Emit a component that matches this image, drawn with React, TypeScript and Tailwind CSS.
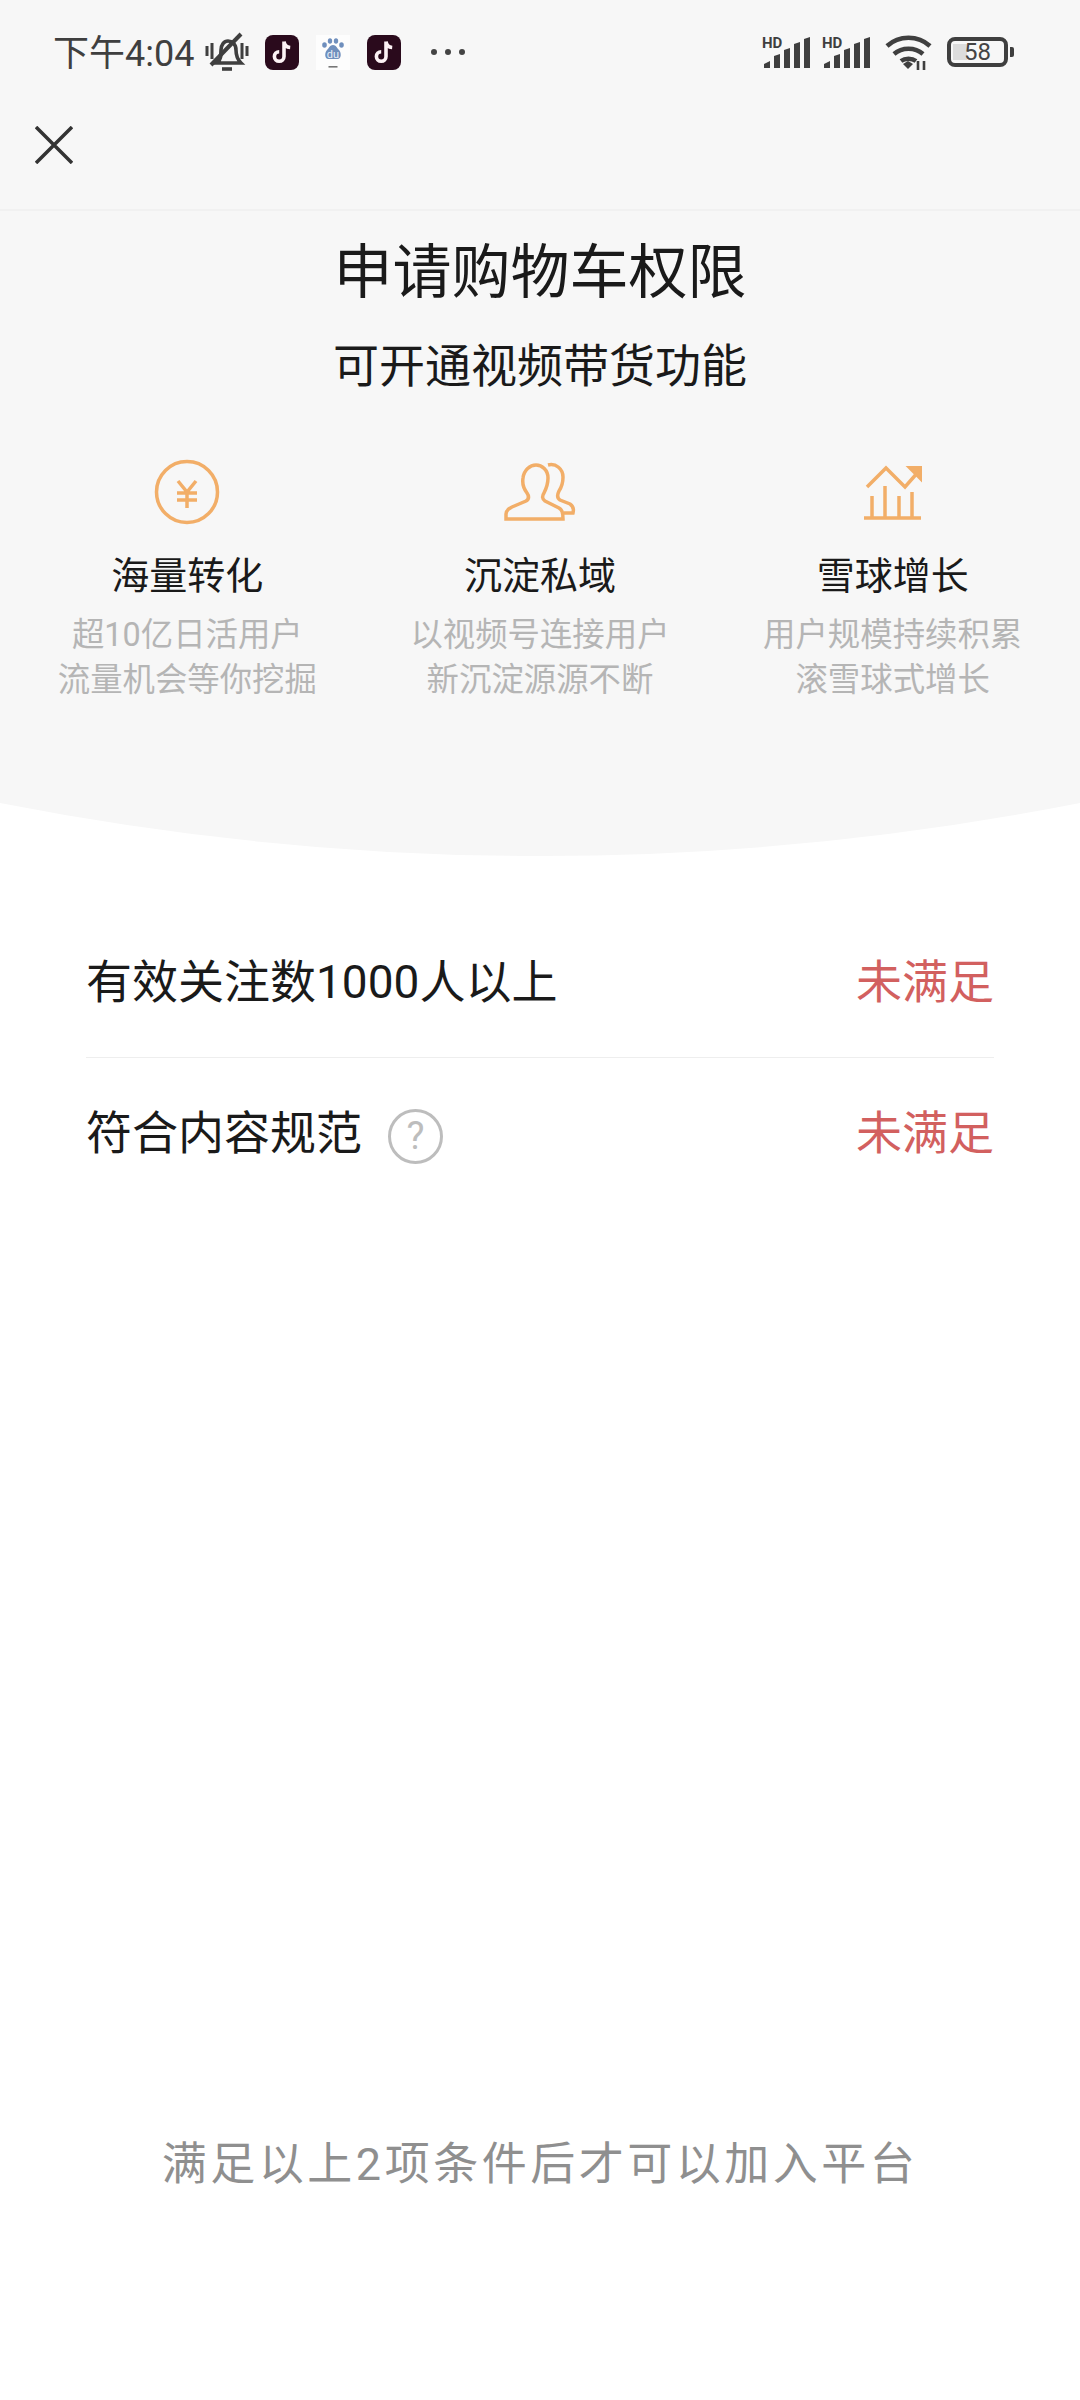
const font = { fontFamily: 'Roboto, "Noto Sans CJK SC", sans-serif' }

function TikTokIcon() {
	return (
		<svg width="34" height="35" viewBox="0 0 34 35">
			<rect width="34" height="35" rx="8" fill="#2a0a1c" />
			<path
				d="M19 6.500v15a4.800 4.800 0 1 1-4.800-4.800M19 6.500c.4 3.400 2.800 5.700 6.200 6"
				fill="none"
				stroke="#fdf2f5"
				strokeWidth="3.600"
			/>
		</svg>
	)
}

function BaiduIcon() {
	return (
		<svg width="34" height="35" viewBox="0 0 34 35">
			<rect width="34" height="35" fill="#fdfdfd" />
			<g fill="#6f8fbd">
				<ellipse cx="8.500" cy="10" rx="2.300" ry="2.800" />
				<ellipse cx="14" cy="6" rx="2.200" ry="2.800" />
				<ellipse cx="20" cy="6" rx="2.200" ry="2.800" />
				<ellipse cx="25.500" cy="10" rx="2.300" ry="2.800" />
				<path d="M17 10c3 0 4 3 6 5s3 8-1 9H12c-4-1-3-7-1-9s3-5 6-5Z" />
			</g>
			<text x="17" y="23" fontSize="11" textAnchor="middle" fill="#e8eef7" fontFamily="Roboto, sans-serif">
				du
			</text>
			<rect x="12.500" y="31" width="9" height="1.600" fill="#777" />
		</svg>
	)
}

function MutedBell() {
	return (
		<svg width="44" height="40" viewBox="0 0 44 40" fill="none" stroke="#3f3f3f" strokeWidth="3.600">
			<path d="M2 14v10M7 11v16M37 11v16M42 14v10" strokeWidth="3" />
			<path d="M12 31c4-3 4-8 4-13 0-5 3-9 7-9s8 3 8 9c0 5 1 9 5 13H8" />
			<path d="M6 33 36 2" strokeWidth="4" />
			<path d="M17 37h10" strokeWidth="3.600" />
		</svg>
	)
}

function Signal() {
	return (
		<svg width="50" height="36" viewBox="0 0 50 36" fill="#3f3f3f">
			<path d="M2 34v-4l6-3v7ZM12 34V22l6-2v14ZM22 34V16l6-2v20ZM32 34V10l6-2v26ZM42 34V5l6-2v31Z" />
			<text x="0" y="14" fontSize="15" fontWeight="700" fontFamily="Roboto, sans-serif">
				HD
			</text>
		</svg>
	)
}

function Wifi() {
	return (
		<svg width="47" height="36" viewBox="0 0 47 36" fill="none" stroke="#3f3f3f" strokeWidth="4.500">
			<path d="M2 12c12-11 31-11 43 0M9 20c8-7 21-7 29 0M16 27c4-3 11-3 15 0" />
			<path d="M18 30l5-3 5 3-5 5Z" fill="#3f3f3f" stroke="none" />
			<path d="M33 27v9M39 36v-9" strokeWidth="2.600" />
		</svg>
	)
}

function YuanIcon() {
	return (
		<svg width="66" height="66" viewBox="0 0 66 66" fill="none" stroke="#f2ae68" strokeWidth="3.500">
			<circle cx="33" cy="33" r="30.500" />
			<path d="M24 22l9 11 9-11M23 34h20M23 41h20M33 33v16" />
		</svg>
	)
}

function UsersIcon() {
	return (
		<svg width="72" height="62" viewBox="0 0 72 62" fill="none" stroke="#f2ae68" strokeWidth="3.500">
			<path d="M2 58v-5c0-3 2-5 6-7l14-6c3-2 3-5 1-8-3-4-5-9-4-15 1-8 7-13 13-13s12 5 12 13c0 6-2 11-4 15-2 3-2 6 1 8l14 7c3 2 4 4 4 11Z" />
			<path d="M44 4c8-2 15 4 15 12 0 6-2 11-4 14-2 4-2 7 1 9l10 4c3 2 4 5 3 9H60" />
		</svg>
	)
}

function ChartIcon() {
	return (
		<svg width="60" height="56" viewBox="0 0 60 56" fill="none" stroke="#f2ae68" strokeWidth="3.500">
			<path d="M4 23 23 4l19 19 14-16" />
			<path d="M45 3h13v13Z" fill="#f2ae68" strokeWidth="2" />
			<path d="M1 54h57M9 54V32M22 54V22M36 54V32M49 54V28" />
		</svg>
	)
}

const features = [
	{ icon: <YuanIcon />, title: '海量转化', lines: ['超10亿日活用户', '流量机会等你挖掘'] },
	{ icon: <UsersIcon />, title: '沉淀私域', lines: ['以视频号连接用户', '新沉淀源源不断'] },
	{ icon: <ChartIcon />, title: '雪球增长', lines: ['用户规模持续积累', '滚雪球式增长'] },
]

export default function App() {
	return (
		<div className="w-[1080px] h-[2400px] bg-white flex flex-col" style={font}>
			<div className="bg-[#f7f7f7] h-[803px] shrink-0">
				{/* Status bar */}
				<div className="h-[104px] pl-[53px] pr-[66px] flex items-center justify-between">
					<div className="flex items-center">
						<span className="text-[36px] text-[#3f3f3f] leading-none w-[152px] whitespace-nowrap pt-[3px]">下午4:04</span>
						<MutedBell />
						<div className="flex items-center gap-[17px] ml-[16px]">
							<TikTokIcon />
							<BaiduIcon />
							<TikTokIcon />
						</div>
						<div className="flex gap-[8px] ml-[30px]">
							<span className="w-[6px] h-[6px] rounded-full bg-[#444]"></span>
							<span className="w-[6px] h-[6px] rounded-full bg-[#444]"></span>
							<span className="w-[6px] h-[6px] rounded-full bg-[#444]"></span>
						</div>
					</div>
					<div className="flex items-center">
						<div className="flex gap-[10px]">
							<Signal />
							<Signal />
						</div>
						<div className="ml-[13px]">
							<Wifi />
						</div>
						<div className="ml-[15px] flex items-center gap-[2px]">
							<div className="w-[61px] h-[30px] border-[4px] border-[#3f3f3f] rounded-[8px] flex items-center justify-center relative">
								<div className="absolute left-[2px] top-[3px] bottom-[3px] w-[14px] bg-[#dcdcdc]"></div>
								<span className="relative text-[24px] text-[#444] leading-none">58</span>
							</div>
							<div className="w-[4px] h-[10px] bg-[#3f3f3f] rounded-r-[2px]"></div>
						</div>
					</div>
				</div>

				{/* Close bar */}
				<div className="h-[107px] border-b-2 border-[#f1f1f1] pl-[35px] pt-[22px]">
					<svg width="38" height="38" viewBox="0 0 38 38" stroke="#333" strokeWidth="3.500">
						<path d="M1 1l36 36M37 1 1 37" />
					</svg>
				</div>

				{/* Heading */}
				<h1 className="mt-[30px] text-center text-[59px] leading-[64px] font-normal text-[#1a1a1a]">申请购物车权限</h1>
				<p className="mt-[33px] text-center text-[46px] leading-[56px] text-[#1a1a1a]">可开通视频带货功能</p>

				{/* Features */}
				<div className="mt-[65px] px-[11px] grid grid-cols-3">
					{features.map((f) => (
						<div key={f.title} className="flex flex-col items-center">
							<div className="h-[66px] flex items-center justify-center">{f.icon}</div>
							<p className="mt-[28px] text-[38px] leading-[46px] text-[#1a1a1a]">{f.title}</p>
							<p className="mt-[14px] text-[32.400px] leading-[45px] text-[#b5b5b5] text-center">
								{f.lines[0]}
								<br />
								{f.lines[1]}
							</p>
						</div>
					))}
				</div>
			</div>

			{/* Bottom curve of the header */}
			<svg width="1080" height="53" viewBox="0 0 1080 53" className="block shrink-0">
				<path d="M0 0H1080Q540 106 0 0Z" fill="#f7f7f7" />
			</svg>

			{/* Requirements */}
			<div className="mt-[52px] mx-[86px]">
				<div className="h-[150px] border-b border-[#eeeeee] flex items-center justify-between">
					<span className="text-[46px] text-[#1a1a1a]">有效关注数1000人以上</span>
					<span className="text-[46px] text-[#d2605f]">未满足</span>
				</div>
				<div className="h-[150px] flex items-center justify-between">
					<div className="flex items-center gap-[26px]">
						<span className="text-[46px] text-[#1a1a1a]">符合内容规范</span>
						<span className="mt-[6px] w-[55px] h-[55px] rounded-full border-[3.500px] border-[#bdbdbd] flex items-center justify-center text-[38px] leading-none text-[#bdbdbd]">
							?
						</span>
					</div>
					<span className="text-[46px] text-[#d2605f]">未满足</span>
				</div>
			</div>

			{/* Footer note */}
			<p className="mt-auto mb-[205px] text-center text-[45px] leading-[60px] tracking-[3.500px] text-[#8f8f8f]">
				满足以上2项条件后才可以加入平台
			</p>
		</div>
	)
}
